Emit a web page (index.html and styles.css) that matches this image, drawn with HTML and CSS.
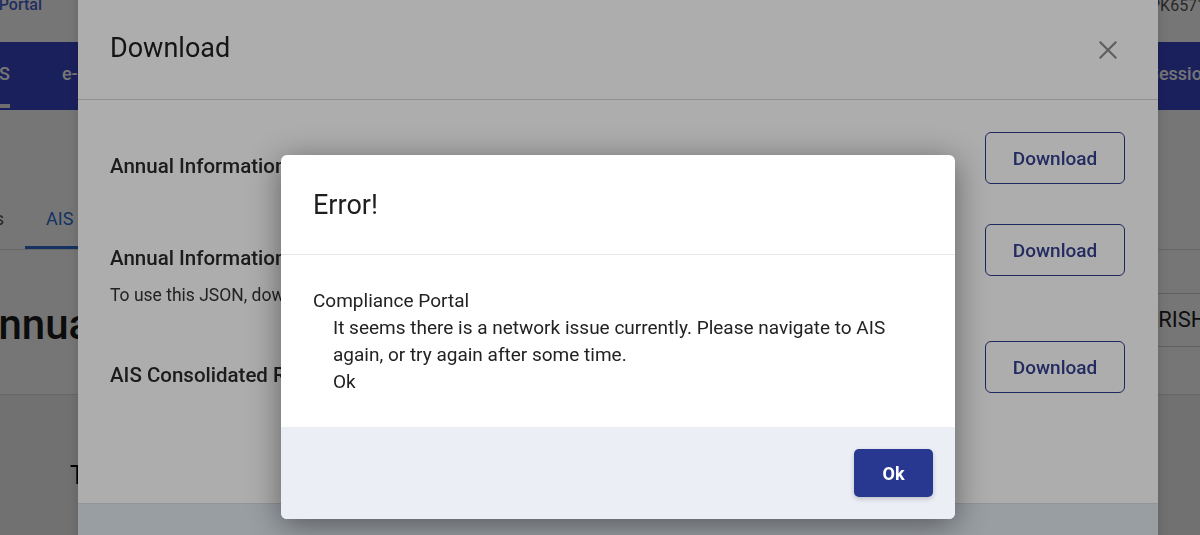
FILE: index.html
```html
<!DOCTYPE html>
<html lang="en">
<head>
<meta charset="utf-8">
<title>AIS - Download</title>
<link rel="stylesheet" href="styles.css">
</head>
<body>
<div class="page">
  <header class="topbar">
    <div class="brand"><span>Compliance Portal</span></div>
    <div class="user-id">PK6571D</div>
  </header>
  <nav class="mainnav">
    <div class="nav-left">
      <a class="nav-item active">AIS</a>
      <a class="nav-item">e-Verification</a>
      <a class="nav-item">e-Campaign</a>
    </div>
    <div class="nav-right"><a class="nav-item">Sessions</a></div>
  </nav>
  <div class="tabs">
    <div class="tabs-before"><span class="tab">Home</span><span class="tab">Instructions</span></div>
    <span class="tab active">AIS</span>
    <span class="tab">Feedback</span>
  </div>
  <div class="title-row">
    <h1 class="page-title">Annual Information Statement (AIS)</h1>
    <div class="name-box">HARISH KUMAR</div>
  </div>
  <div class="content">
    <p class="lead">Taxpayer Information Summary (TIS)</p>
  </div>
</div>

<div class="backdrop"></div>

<div class="dl-modal">
  <div class="dl-header">
    <h2 class="dl-title">Download</h2>
    <button class="close-btn" aria-label="Close">
      <svg viewBox="0 0 18 18" width="18" height="18"><path d="M1.5 1.5 L16.5 16.5 M16.5 1.5 L1.5 16.5" stroke="currentColor" stroke-width="2.2" fill="none" stroke-linecap="square"/></svg>
    </button>
  </div>
  <div class="dl-body">
    <div class="dl-row">
      <div class="dl-info"><div class="dl-name">Annual Information Statement (AIS) - PDF</div></div>
      <button class="dl-btn">Download</button>
    </div>
    <div class="dl-row has-note">
      <div class="dl-info">
        <div class="dl-name">Annual Information Statement (AIS) - JSON</div>
        <div class="dl-note">To use this JSON, download the AIS Utility from the AIS homepage</div>
      </div>
      <button class="dl-btn">Download</button>
    </div>
    <div class="dl-row">
      <div class="dl-info"><div class="dl-name">AIS Consolidated Report</div></div>
      <button class="dl-btn">Download</button>
    </div>
  </div>
  <div class="dl-footer"></div>
</div>

<div class="backdrop"></div>

<div class="err-modal" role="alertdialog">
  <div class="err-header"><h3 class="err-title">Error!</h3></div>
  <div class="err-body">
    <div class="err-source">Compliance Portal</div>
    <div class="err-msg">It seems there is a network issue currently. Please navigate to AIS again, or try again after some time.<br>Ok</div>
  </div>
  <div class="err-footer"><button class="ok-btn">Ok</button></div>
</div>
</body>
</html>
```

FILE: styles.css
```css
* { box-sizing: border-box; }
html, body { margin: 0; padding: 0; }
body {
  width: 1200px;
  height: 535px;
  overflow: hidden;
  font-family: Roboto, "Liberation Sans", Arial, sans-serif;
  color: #212121;
  background: #fff;
}

/* ---------- page under the dialogs ---------- */
.page {
  width: 1200px;
  height: 535px;
  overflow: hidden;
  background: #fff;
}

.topbar {
  display: flex;
  justify-content: space-between;
  align-items: flex-start;
  height: 42px;
  background: #fff;
}
.brand {
  width: 42px;
  display: flex;
  justify-content: flex-end;
  overflow: hidden;
  white-space: nowrap;
  margin-top: -5px;
  font-size: 16px;
  line-height: 20px;
  font-weight: 500;
  color: #4a64d0;
}
.user-id {
  width: 50px;
  overflow: hidden;
  white-space: nowrap;
  margin-top: -4px;
  font-size: 16px;
  line-height: 20px;
  color: #555;
}

.mainnav {
  display: flex;
  justify-content: space-between;
  align-items: flex-start;
  height: 68px;
  background: #3a46c8;
}
.nav-left {
  display: flex;
  gap: 52px;
  margin-left: -18px;
}
.nav-right {
  width: 52px;
  overflow: hidden;
  white-space: nowrap;
}
.nav-item {
  display: flex;
  align-items: center;
  height: 66px;
  font-size: 18px;
  font-weight: 500;
  color: #fff;
  white-space: nowrap;
  border-bottom: 4px solid transparent;
}
.nav-item.active { border-bottom-color: #f0f0f0; }

.tabs {
  display: flex;
  margin-top: 83px;
  border-bottom: 1px solid #dcdcdc;
}
.tabs-before {
  width: 25px;
  display: flex;
  justify-content: flex-end;
  overflow: hidden;
}
.tab {
  padding: 14px 21px 15px;
  font-size: 18px;
  line-height: 24px;
  color: #555;
  white-space: nowrap;
  border-bottom: 3px solid transparent;
}
.tab.active { color: #2c6fd1; border-bottom-color: #2c6fd1; }

.title-row {
  display: flex;
  justify-content: space-between;
  align-items: flex-start;
  height: 145px;
  border-bottom: 1px solid #dcdcdc;
}
.page-title {
  margin: 50px 0 0 -29px;
  font-size: 42px;
  line-height: 50px;
  font-weight: 500;
  color: #1a1a1a;
  white-space: nowrap;
}
.name-box {
  width: 100px;
  margin-top: 43px;
  height: 54px;
  padding-left: 28px;
  border-top: 1px solid #cfcfcf;
  border-bottom: 1px solid #cfcfcf;
  font-size: 22px;
  line-height: 52px;
  color: #222;
  white-space: nowrap;
  overflow: hidden;
}

.content {
  height: 200px;
  background: #f4f4f4;
  padding: 66px 0 0 70px;
}
.lead {
  margin: 0;
  font-size: 25px;
  line-height: 30px;
  color: #000;
  will-change: transform;
}

/* ---------- dialog backdrops (one per open dialog) ---------- */
.backdrop {
  position: fixed;
  inset: 0;
  background: rgba(0, 0, 0, 0.32);
}

/* ---------- download dialog ---------- */
.dl-modal {
  position: fixed;
  left: 78px;
  top: -12px;
  width: 1080px;
  height: 620px;
  background: #fff;
  display: flex;
  flex-direction: column;
  box-shadow: 0 0 12px rgba(0, 0, 0, 0.15);
}
.dl-header {
  display: flex;
  justify-content: space-between;
  align-items: center;
  padding: 44px 38px 35px 32px;
  border-bottom: 1px solid #d6d6d6;
}
.dl-title {
  margin: 0;
  font-size: 27px;
  line-height: 32px;
  font-weight: 400;
  color: #202020;
}
.close-btn {
  width: 24px;
  height: 24px;
  margin-top: 4px;
  padding: 3px;
  border: 0;
  background: none;
  color: #8c8c8c;
  display: flex;
  align-items: center;
  justify-content: center;
}
.dl-body {
  height: 403px;
  padding: 12px 33px 0 32px;
}
.dl-row {
  display: flex;
  justify-content: space-between;
  align-items: flex-start;
  padding: 20px 0;
}
.dl-row.has-note { padding-bottom: 14px; }
.dl-info { padding-top: 20px; }
.dl-name {
  font-size: 20.5px;
  line-height: 28px;
  font-weight: 500;
  color: #2a2a2a;
  white-space: nowrap;
}
.dl-note {
  margin-top: 11px;
  font-size: 17.5px;
  line-height: 24px;
  color: #333;
  white-space: nowrap;
}
.dl-btn {
  width: 140px;
  height: 52px;
  border: 1px solid #2f3a8c;
  border-radius: 6px;
  background: transparent;
  font-family: inherit;
  font-size: 19px;
  font-weight: 500;
  color: #34408f;
}
.dl-footer {
  flex: 1;
  background: #e2e9f1;
  border-top: 1px solid #d5dce4;
}

/* ---------- error dialog ---------- */
.err-modal {
  position: fixed;
  left: 281px;
  top: 155px;
  width: 674px;
  background: #fff;
  border-radius: 6px;
  overflow: hidden;
  box-shadow: 0 6px 32px rgba(0, 0, 0, 0.45);
}
.err-header {
  padding: 34px 32px 33px;
  border-bottom: 1px solid #e6e6e6;
}
.err-title {
  margin: 0;
  font-size: 27px;
  line-height: 32px;
  font-weight: 400;
  color: #1e1e1e;
}
.err-body {
  padding: 32px;
  font-size: 19px;
  line-height: 27px;
  color: #222;
}
.err-msg { padding-left: 20px; }
.err-footer {
  display: flex;
  justify-content: flex-end;
  padding: 22px;
  background: #eceef6;
}
.ok-btn {
  height: 48px;
  min-width: 79px;
  padding: 0 26px;
  border: 0;
  border-radius: 5px;
  background: #283891;
  color: #fff;
  font-family: inherit;
  font-size: 18px;
  font-weight: 700;
  box-shadow: 0 2px 5px rgba(0, 0, 0, 0.2);
}
```
